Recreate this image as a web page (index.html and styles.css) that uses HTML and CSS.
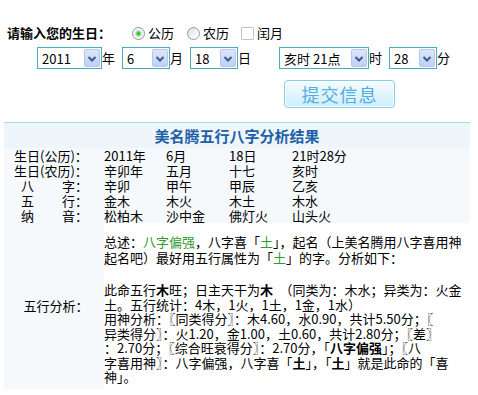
FILE: index.html
```html
<!DOCTYPE html>
<html>

<head>
    <meta charset="utf-8">
    <title>五行八字分析</title>
    <link rel="stylesheet" href="styles.css">
</head>

<body>

    <div class="form_box">
        <div class="row_type">
            <span class="ask">请输入您的生日：</span>
            <label class="opt opt_first"><input type="radio" name="dtype" checked>公历</label>
            <label class="opt"><input type="radio" name="dtype">农历</label>
            <label class="opt opt_last"><input type="checkbox" name="leap">闰月</label>
        </div>

        <div class="row_date">
            <span class="sel sel_year"><select name="year"><option>2011</option></select><i class="arr"><svg width="14" height="15" viewBox="0 0 14 15"><path d="M3.5 6 L7 9.5 L10.5 6" fill="none" stroke="#3f5a8a" stroke-width="2"/></svg></i></span>年
            <span class="sel sel_small"><select name="month"><option>6</option></select><i class="arr"><svg width="14" height="15" viewBox="0 0 14 15"><path d="M3.5 6 L7 9.5 L10.5 6" fill="none" stroke="#3f5a8a" stroke-width="2"/></svg></i></span>月
            <span class="sel sel_small"><select name="day"><option>18</option></select><i class="arr"><svg width="14" height="15" viewBox="0 0 14 15"><path d="M3.5 6 L7 9.5 L10.5 6" fill="none" stroke="#3f5a8a" stroke-width="2"/></svg></i></span>日
            <span class="sel sel_hour"><select name="hour"><option>亥时 21点</option></select><i class="arr"><svg width="14" height="15" viewBox="0 0 14 15"><path d="M3.5 6 L7 9.5 L10.5 6" fill="none" stroke="#3f5a8a" stroke-width="2"/></svg></i></span>时
            <span class="sel sel_small"><select name="minute"><option>28</option></select><i class="arr"><svg width="14" height="15" viewBox="0 0 14 15"><path d="M3.5 6 L7 9.5 L10.5 6" fill="none" stroke="#3f5a8a" stroke-width="2"/></svg></i></span>分
        </div>

        <div class="row_btn">
            <button class="submit_btn">提交信息</button>
        </div>
    </div>

    <table class="result">
        <colgroup>
            <col class="c_label">
            <col class="c_val">
            <col class="c_val2">
            <col class="c_val2">
            <col>
        </colgroup>
        <tr>
            <td class="result_title" colspan="5">美名腾五行八字分析结果</td>
        </tr>
        <tr class="info">
            <td class="lab">生日(公历)：</td><td>2011年</td><td>6月</td><td>18日</td><td>21时28分</td>
        </tr>
        <tr class="info">
            <td class="lab">生日(农历)：</td><td>辛卯年</td><td>五月</td><td>十七</td><td>亥时</td>
        </tr>
        <tr class="info">
            <td class="lab"><span class="lab_a">八</span>字：</td><td>辛卯</td><td>甲午</td><td>甲辰</td><td>乙亥</td>
        </tr>
        <tr class="info">
            <td class="lab"><span class="lab_a">五</span>行：</td><td>金木</td><td>木火</td><td>木土</td><td>木水</td>
        </tr>
        <tr class="info">
            <td class="lab"><span class="lab_a">纳</span>音：</td><td>松柏木</td><td>沙中金</td><td>佛灯火</td><td>山头火</td>
        </tr>
        <tr>
            <td class="ana_label">五行分析：</td>
            <td class="ana_text" colspan="4">
                <p class="summary">总述：<span class="green">八字偏强</span>，八字喜「<span class="green">土</span>」，起名（上美名腾用八字喜用神<br>起名吧）最好用五行属性为「<span class="green">土</span>」的字。分析如下：</p>
                <p class="detail">此命五行<b>木</b>旺；日主天干为<b>木</b>　（同类为：木水；异类为：火金<br>土。五行统计：4木，1火，1土，1金，1水）<br>用神分析：〖同类得分〗：木4.60，水0.90，共计5.50分；〖<br>异类得分〗：火1.20，金1.00，土0.60，共计2.80分；〖差〗<br>：2.70分；〖综合旺衰得分〗：2.70分，「<b>八字偏强</b>」；〖八<br>字喜用神〗：八字偏强，八字喜「<b>土</b>」，「<b>土</b>」就是此命的「喜<br>神」。</p>
            </td>
        </tr>
    </table>

</body>

</html>
```

FILE: styles.css
```css
body {
    margin: 0;
    background: #fff;
    color: #000;
    font-family: "Noto Sans CJK SC", sans-serif;
    font-size: 13px;
}

.form_box {
    padding-top: 24px;
}

.row_type {
    padding-left: 7px;
    height: 18px;
    line-height: 18px;
    display: flex;
    align-items: center;
}

.ask {
    font-weight: bold;
}

.opt {
    display: flex;
    align-items: center;
    margin-left: 13px;
}

.opt_first {
    margin-left: 21px;
}

.opt_last {
    margin-left: 12px;
}

.opt input {
    appearance: none;
    -webkit-appearance: none;
    width: 13px;
    height: 13px;
    margin: 0 3px 0 0;
    box-sizing: border-box;
}

.opt input[type=radio] {
    border: 1px solid #8d99a6;
    border-radius: 50%;
    background: linear-gradient(135deg, #d8dde3 0%, #f4f6f8 60%, #ffffff 100%);
}

.opt input[type=radio]:checked {
    background: radial-gradient(circle, #2fb52f 0, #4fc84f 1.5px, #c9ecc9 3px, #f4f8f4 4px, #f4f6f8 100%);
}

.opt input[type=checkbox] {
    border: 1px solid #c4c4c4;
    border-radius: 1px;
    background: #fff;
    margin-right: 3px;
}

.row_date {
    margin-top: 5px;
    padding-left: 37px;
    height: 22px;
    line-height: 22px;
    display: flex;
    align-items: center;
}

.sel {
    display: inline-flex;
    align-items: center;
    height: 22px;
    box-sizing: border-box;
    border: 1px solid #45aeb9;
    background: #fff;
    margin-left: 7px;
}

.sel_year {
    width: 65px;
    margin-left: 0;
}

.sel_small {
    width: 48px;
}

.sel_hour {
    width: 90px;
    margin-left: 28px;
}

.sel select {
    appearance: none;
    -webkit-appearance: none;
    border: 0;
    outline: none;
    background: transparent;
    flex: 1;
    min-width: 0;
    padding: 0 0 0 4px;
    font-family: "Noto Sans CJK SC", sans-serif;
    font-size: 13px;
    color: #000;
}

.arr {
    display: flex;
    width: 16px;
    height: 18px;
    margin-right: 1px;
    box-sizing: border-box;
    border: 1px solid #b4c7ee;
    border-radius: 2px;
    background: linear-gradient(#dde7fb, #bccff5);
    align-items: center;
    justify-content: center;
}

.row_btn {
    margin-top: 11px;
    padding-left: 284px;
}

.submit_btn {
    width: 111px;
    height: 28px;
    border: 1px solid #86cdea;
    border-radius: 4px;
    background: linear-gradient(#f6fcff 0%, #e2f5fd 45%, #cdeefb 100%);
    box-shadow: inset 0 0 0 1px #ffffff;
    color: #55ade0;
    font-family: "Noto Sans CJK SC", sans-serif;
    font-size: 18px;
    letter-spacing: 1px;
    line-height: 24px;
    padding: 0;
    cursor: pointer;
}

.result {
    margin: 14px 0 0 4px;
    width: 466px;
    table-layout: fixed;
    border-spacing: 0;
    border-top: 1px solid #a6dbe9;
    background: #f6f9fc;
}

.c_label {
    width: 100px;
}

.c_val {
    width: 62px;
}

.c_val2 {
    width: 63px;
}

.result td {
    padding: 0;
}

.result_title {
    height: 25px;
    text-align: center;
    background: #eef5fb;
    color: #1f60a8;
    font-size: 15px;
    font-weight: bold;
}

.info td {
    height: 15px;
    line-height: 15px;
    white-space: nowrap;
}

.info .lab {
    padding-left: 10px;
}

.lab_a {
    margin: 0 28px 0 7px;
}

.ana_label {
    text-align: center;
    vertical-align: middle;
    padding-left: 4px !important;
}

.result .ana_text {
    background: #fff;
    padding: 11px 0 4px 0;
    white-space: nowrap;
}

.ana_text p {
    margin: 0;
}

.summary {
    line-height: 16px;
}

.detail {
    margin-top: 17px !important;
    line-height: 14.5px;
}

.green {
    color: #2f9a2f;
}
```
